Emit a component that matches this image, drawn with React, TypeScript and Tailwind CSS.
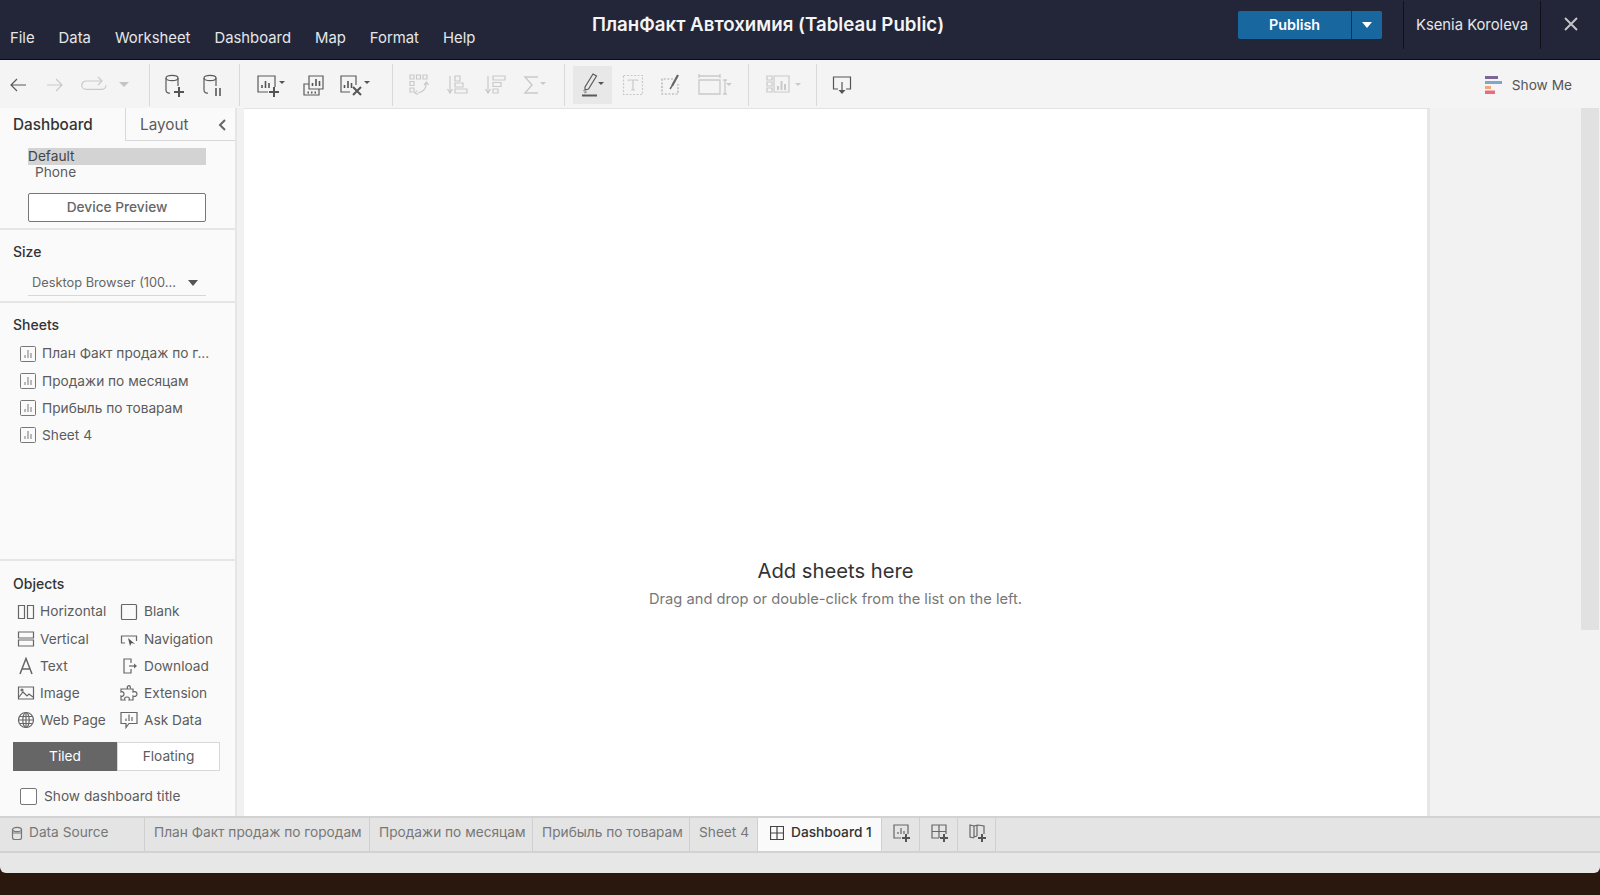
import React from "react";

const Ic = ({ w = 24, h = 24, c = "#5a5a5a", sw = 1.2, children }: { w?: number; h?: number; c?: string; sw?: number; children: React.ReactNode }) => (
  <svg width={w} height={h} viewBox={`0 0 ${w} ${h}`} fill="none" stroke={c} strokeWidth={sw}>
    {children}
  </svg>
);
const OFF = "#c9c9c9";
const Caret = ({ x, y, c = "#555", s = 3 }: { x: number; y: number; c?: string; s?: number }) => (
  <path d={`M${x} ${y}h${s * 2}l-${s} ${s}z`} fill={c} stroke="none" />
);
const Plus = ({ x, y, r = 5, c = "#555" }: { x: number; y: number; r?: number; c?: string }) => (
  <path d={`M${x - r} ${y}h${r * 2}M${x} ${y - r}v${r * 2}`} stroke={c} strokeWidth={2} />
);
const Bars = ({ x, y, c = "#555" }: { x: number; y: number; c?: string }) => (
  <path d={`M${x} ${y}v-3M${x + 3.5} ${y}v-7M${x + 7} ${y}v-5`} stroke={c} strokeWidth={1.6} />
);

const Back = ({ c = "#5a5a5a" }: { c?: string }) => (
  <Ic c={c}><path d="M20 12H5M11 6l-6 6 6 6" /></Ic>
);
const Forward = () => (
  <Ic c={OFF}><path d="M4 12h15M13 6l6 6-6 6" /></Ic>
);
const Redo = () => (
  <Ic w={30} c={OFF}><path d="M22 8H7a4.2 4.2 0 0 0 0 8.4h16a4.2 4.2 0 0 0 4-4.2" /><path d="M19 4l4 4-4 4" /></Ic>
);
const Cyl = ({ extra }: { extra: React.ReactNode }) => (
  <Ic w={24} h={26}>
    <ellipse cx="10" cy="6" rx="6" ry="2.6" />
    <path d="M4 6v12a3 3 0 0 0 4 3M16 6v8" />
    {extra}
  </Ic>
);
const NewSheet = () => (
  <Ic w={32} h={26}>
    <path d="M13 20H3V4h17v11" />
    <Bars x={7} y={16} />
    <Plus x={19} y={20} />
    <Caret x={24} y={9} />
  </Ic>
);
const Dup = () => (
  <Ic w={26} h={26}>
    <path d="M8 4h14v13H8z" />
    <Bars x={11.5} y={14} />
    <path d="M8 12H3v11h15v-6" />
    <path d="M6.5 20.5h1.5M10 20.5h1.5M13.5 20.5h1.5" strokeWidth={2} />
  </Ic>
);
const Clear = () => (
  <Ic w={34} h={26}>
    <path d="M12 20H3V4h15v9" />
    <Bars x={6.5} y={16} />
    <path d="M15 15l8 8M23 15l-8 8" strokeWidth={2} stroke="#555" />
    <Caret x={26} y={9} />
  </Ic>
);
const Swap = () => (
  <Ic w={24} h={26} c={OFF}>
    <path d="M3 3h4v4H3zM9.5 3h4v4h-4zM16 3h4v4h-4zM3 9.5h4v4H3zM3 16h4v4H3z" />
    <path d="M19 11c1 4-2 9-8 10M10 18.5l-2 2.5 3 1.5M17 13l2.5-3 2 3" />
  </Ic>
);
const SortA = () => (
  <Ic w={24} h={26} c={OFF}>
    <path d="M5 4v16M2.5 17l2.5 4 2.5-4" />
    <path d="M10 4h5v5h-5zM10 11h8v4h-8zM10 17h12v4H10z" />
  </Ic>
);
const SortD = () => (
  <Ic w={24} h={26} c={OFF}>
    <path d="M5 4v16M2.5 17l2.5 4 2.5-4" />
    <path d="M10 4h12v4H10zM10 10.5h8v4h-8zM10 17h5v4h-5z" />
  </Ic>
);
const Sigma = () => (
  <Ic w={28} h={26} c={OFF} sw={1.4}>
    <path d="M18 5H5l7 8-7 8h13" />
    <Caret x={20} y={10} c={OFF} />
  </Ic>
);
const Pen = () => (
  <Ic w={26} h={28}>
    <path d="M5 16L13 3l3.5 2-8 13-3.5 1z" />
    <path d="M3 19.5l3 1M4 22l3-1" stroke="#999" />
    <path d="M2 24.5h15" strokeWidth={2} />
    <Caret x={18} y={11} />
  </Ic>
);
const TBox = () => (
  <Ic w={22} h={22} c={OFF}>
    <path d="M1.5 1.5h19v19h-19z" strokeDasharray="2 1.5" />
    <path d="M6.5 7v-1h9v1M11 6v10M9 16h4" />
  </Ic>
);
const Annot = () => (
  <Ic w={22} h={24} c="#8c8c8c">
    <path d="M13 6H2v15h16V11" strokeDasharray="2 1.6" stroke="#aaa" />
    <path d="M18 2l-6 11" strokeWidth={2.2} stroke="#666" />
    <path d="M12 13l-2 3" strokeWidth={1.4} stroke="#666" />
  </Ic>
);
const Fit = () => (
  <Ic w={36} h={26} c={OFF} sw={1.3}>
    <path d="M2 2v4M2 4h21M23 2v4M2 8h21v14H2zM26 8h4M28 8v14M26 22h4" />
    <Caret x={29} y={11} c={OFF} />
  </Ic>
);
const SmallShow = () => (
  <Ic w={38} h={24} c={OFF}>
    <path d="M2 3h5v4H2zM2 9h5v4H2zM2 15h5v4H2zM9 3h15v16H9z" />
    <path d="M13 17v-4M16.5 17v-9M20 17v-6" strokeWidth={2} />
    <Caret x={30} y={10} c={OFF} />
  </Ic>
);
const Share = () => (
  <Ic w={22} h={22} c="#555">
    <path d="M7 15H2.5V3h17v12H15" />
    <path d="M11 8v10" />
    <path d="M7.5 16h7L11 20z" fill="#555" stroke="none" />
  </Ic>
);
const ShowIcon = () => (
  <svg width="17" height="18" viewBox="0 0 17 18">
    <rect x="0" y="0" width="13" height="3" fill="#7d6597" />
    <rect x="0" y="5" width="17" height="3" fill="#7fa6cc" />
    <rect x="0" y="10" width="6" height="3" fill="#f0a878" />
    <rect x="0" y="14.5" width="10" height="3.5" fill="#ee6a7a" />
  </svg>
);

const Tool = ({ className = "", children }: { className?: string; children: React.ReactNode }) => (
  <div className={`h-[38px] flex items-center justify-center shrink-0 ${className}`}>{children}</div>
);
const Sep = ({ className = "" }: { className?: string }) => <div className={`w-px h-[42px] bg-[#d9d9d9] shrink-0 ${className}`} />;

const Toolbar = () => (
  <div className="h-[48px] bg-[#f4f4f4] flex items-center shrink-0 pt-[2px]">
    <Tool className="w-[36px]"><Back /></Tool>
    <Tool className="w-[38px]"><Forward /></Tool>
    <Tool className="w-[40px]"><Redo /></Tool>
    <Tool className="w-[20px]"><Ic w={12} h={12} c={OFF}><Caret x={1} y={3} c="#c4c4c4" s={5} /></Ic></Tool>
    <Sep className="ml-[15px]" />
    <Tool className="w-[38px] ml-[5px]"><Cyl extra={<Plus x={17} y={20} />} /></Tool>
    <Tool className="w-[38px]"><Cyl extra={<path d="M16 16v8M20 16v8" strokeWidth={2} stroke="#777" />} /></Tool>
    <Sep className="ml-[8px]" />
    <Tool className="w-[38px] ml-[12px]"><NewSheet /></Tool>
    <Tool className="w-[38px] ml-[5px]"><Dup /></Tool>
    <Tool className="w-[38px] ml-[3px]"><Clear /></Tool>
    <Sep className="ml-[18px]" />
    <Tool className="w-[38px] ml-[7px]"><Swap /></Tool>
    <Tool className="w-[38px]"><SortA /></Tool>
    <Tool className="w-[38px]"><SortD /></Tool>
    <Tool className="w-[38px] ml-px"><Sigma /></Tool>
    <Sep className="ml-[11px]" />
    <Tool className="w-[39px] ml-[8px] bg-[#e8e8e8]"><Pen /></Tool>
    <Tool className="w-[38px] ml-[2px]"><TBox /></Tool>
    <Tool className="w-[38px]"><Annot /></Tool>
    <Tool className="w-[44px] ml-[3px]"><Fit /></Tool>
    <Sep className="ml-[11px]" />
    <Tool className="w-[50px] ml-[10px]"><SmallShow /></Tool>
    <Sep className="ml-[7px]" />
    <Tool className="w-[38px] ml-[6px]"><Share /></Tool>
    <div className="flex-1" />
    <div className="flex items-center gap-[10px] pr-[28px] text-[13.7px] text-[#555]">
      <ShowIcon />
      <span>Show Me</span>
    </div>
  </div>
);

const SheetIcon = () => (
  <Ic w={16} h={16} c="#777" sw={1}>
    <rect x="0.5" y="0.5" width="15" height="15" rx="1" />
    <path d="M5 12V9M8 12V4M11 12V7" />
  </Ic>
);

const H = ({ children, className = "" }: { children: React.ReactNode; className?: string }) => (
  <div className={`text-[14px] font-medium text-[#333] leading-[20px] ${className}`}>{children}</div>
);

const objs: [React.ReactNode, string, React.ReactNode, string][] = [
  [<Ic w={18} h={18} c="#666"><path d="M1.5 2.5h6v13h-6zM10.5 2.5h6v13h-6z" /></Ic>, "Horizontal",
   <Ic w={18} h={18} c="#666"><rect x="1.5" y="1.5" width="15" height="15" rx="1" /></Ic>, "Blank"],
  [<Ic w={18} h={18} c="#666"><path d="M1.5 2h15v6h-15zM1.5 10h15v6h-15z" /></Ic>, "Vertical",
   <Ic w={18} h={18} c="#666"><path d="M5 13H1.5V6h15v5" /><path d="M8 8l2 8 1.5-3 3.5 1z" fill="#555" stroke="none" /></Ic>, "Navigation"],
  [<Ic w={18} h={18} c="#666" sw={1.5}><path d="M3 17L9 1.5 15 17M5 12h8" /></Ic>, "Text",
   <Ic w={18} h={18} c="#666"><path d="M11 6V2H4v14h7v-4" /><path d="M9 9h6" /><path d="M14 6.5L17 9l-3 2.5z" fill="#666" stroke="none" /></Ic>, "Download"],
  [<Ic w={18} h={18} c="#666"><path d="M1.5 3h15v12h-15z" /><path d="M2 13l4-5 4 4 2-2 4 3" /><circle cx="5" cy="6" r="1" /></Ic>, "Image",
   <Ic w={18} h={18} c="#666"><path d="M8 2c2-1 3 1 2 3h3v3c2-1 4 0 4 2s-2 3-4 2v4H9c1-2 0-3-2-3s-3 1-2 3H1v-4c2 1 3-1 3-2S3 7 1 8V5h7c-1-1-1-2 0-3z" /></Ic>, "Extension"],
  [<Ic w={18} h={18} c="#666"><circle cx="9" cy="9" r="7.5" /><ellipse cx="9" cy="9" rx="3.2" ry="7.5" /><path d="M1.5 9h15M2.5 5.5h13M2.5 12.5h13M9 1.5v15" /></Ic>, "Web Page",
   <Ic w={18} h={18} c="#666"><path d="M1 1.5h16v11H9l-3 4v-4H1z" /><path d="M6 10V7.5M9 10V3.5M12 10V6" /></Ic>, "Ask Data"],
];

const Sidebar = () => (
  <div className="w-[235px] bg-[#fafafa] flex flex-col shrink-0 text-[#5c5c5c] text-[13.7px]">
    <div className="flex h-[33px] shrink-0">
      <div className="w-[126px] pl-[13px] pt-[2px] flex items-center text-[15.3px] font-medium text-[#333] border-r border-[#d8d8d8]">Dashboard</div>
      <div className="flex-1 flex items-center justify-between pl-[14px] pr-[8px] pt-[2px] text-[15.3px] border-b border-[#d8d8d8]">
        <span>Layout</span>
        <svg width="10" height="14" viewBox="0 0 10 14" fill="none" stroke="#666" strokeWidth="2"><path d="M8 2L3 7l5 5" /></svg>
      </div>
    </div>
    <div className="h-[89px] shrink-0 border-b-2 border-[#e6e6e6] pl-[28px] pr-[29px] pt-[7px]">
      <div className="bg-[#d3d3d3] h-[17px] leading-[17px] text-[#444]">Default</div>
      <div className="h-[15px] leading-[15px] pl-[7px]">Phone</div>
      <div className="mt-[13px] h-[29px] border border-[#777] rounded-[2px] bg-white flex items-center justify-center font-medium text-[#666]">Device Preview</div>
    </div>
    <div className="h-[73px] shrink-0 border-b-2 border-[#e6e6e6] pt-[12px]">
      <H className="pl-[13px]">Size</H>
      <div className="ml-[28px] mr-[29px] mt-[8px] pl-[4px] pr-[8px] h-[26px] border-b border-[#d8d8d8] flex items-center justify-between text-[12.8px] text-[#666]">
        <span>Desktop Browser (100...</span>
        <svg width="10" height="6" viewBox="0 0 10 6"><path d="M0 0h10L5 6z" fill="#555" /></svg>
      </div>
    </div>
    <div className="h-[258px] shrink-0 border-b-2 border-[#e6e6e6] pt-[12px]">
      <H className="pl-[13px] mb-[5px]">Sheets</H>
      {["План Факт продаж по г...", "Продажи по месяцам", "Прибыль по товарам", "Sheet 4"].map((t) => (
        <div key={t} className="h-[27.2px] flex items-center gap-[6px] pl-[20px]">
          <SheetIcon />
          <span>{t}</span>
        </div>
      ))}
    </div>
    <div className="flex-1 pt-[13px]">
      <H className="pl-[13px] mb-[4px]">Objects</H>
      {objs.map(([a, b, c, d]) => (
        <div key={b} className="h-[27.2px] flex items-center">
          <div className="w-[120px] flex items-center pl-[17px] gap-[5px]">{a}<span>{b}</span></div>
          <div className="flex items-center gap-[6px]">{c}<span>{d}</span></div>
        </div>
      ))}
      <div className="flex mx-[13px] mt-[8px] h-[29px] w-[207px]">
        <div className="w-[104px] bg-[#666] text-white flex items-center justify-center">Tiled</div>
        <div className="flex-1 bg-white border border-[#d8d8d8] flex items-center justify-center">Floating</div>
      </div>
      <div className="flex items-center gap-[7px] pl-[20px] mt-[15px]">
        <div className="w-[17px] h-[17px] border border-[#777] rounded-[2px] bg-white" />
        <span>Show dashboard title</span>
      </div>
    </div>
  </div>
);

const Tab = ({ className = "", children }: { className?: string; children: React.ReactNode }) => (
  <div className={`h-full flex items-center border-r border-[#cfcfcf] shrink-0 pb-[4px] ${className}`}>{children}</div>
);
const AddTab = ({ children }: { children: React.ReactNode }) => (
  <Tab className="w-[38px] justify-center pl-[3px]">{children}</Tab>
);

const TabBar = () => (
  <div className="h-[37px] shrink-0 bg-[#e4e4e4] border-y-2 border-[#d2d2d2] flex text-[13.7px] text-[#777]">
    <Tab className="w-[145px] pl-[11px] gap-[6px]">
      <Ic w={12} h={14} c="#777"><ellipse cx="6" cy="3.5" rx="4.5" ry="2.2" /><path d="M1.5 3.5v8a2 2 0 0 0 2 2h5a2 2 0 0 0 2-2v-8M1.5 7h9" /></Ic>
      <span>Data Source</span>
    </Tab>
    <Tab className="w-[225px] pl-[9px]">План Факт продаж по городам</Tab>
    <Tab className="w-[163px] pl-[9px]">Продажи по месяцам</Tab>
    <Tab className="w-[157px] pl-[9px]">Прибыль по товарам</Tab>
    <Tab className="w-[68px] pl-[9px]">Sheet 4</Tab>
    <Tab className="w-[124px] pl-[12px] gap-[7px] bg-[#fafafa] text-[#333] font-medium">
      <Ic w={14} h={14} c="#444"><path d="M.5.5h13v13H.5zM7 .5v13M.5 7h13" /></Ic>
      <span>Dashboard 1</span>
    </Tab>
    <AddTab><Ic w={20} h={20} c="#666"><path d="M9 15H2V2h14v9" /><path d="M6 11V9M9 11V5M12 11V8" /><Plus x={14} y={15} r={4} /></Ic></AddTab>
    <AddTab><Ic w={20} h={20} c="#666"><path d="M9 15H2V2h14v9M9 2v13M2 8.5h14" /><Plus x={14} y={15} r={4} /></Ic></AddTab>
    <AddTab><Ic w={20} h={20} c="#666"><path d="M9 13l-3 1V3l4-1 6 1v8M9 2v11M6 3L2 2v12l4 1" /><Plus x={14} y={15} r={4} /></Ic></AddTab>
  </div>
);

export default function App() {
  return (
    <div className="w-[1600px] h-[895px] overflow-hidden flex flex-col bg-[#2a180f]" style={{ fontFamily: 'Inter, "Liberation Sans", sans-serif' }}>
      <div className="h-[60px] shrink-0 bg-[#222638] border-b border-[#0c0c12] flex text-white">
        <div className="w-[592px] shrink-0 flex gap-[24px] pl-[10px] pt-[27px] text-[14.85px] leading-[22px] text-[#e6e6e8]">
          {["File", "Data", "Worksheet", "Dashboard", "Map", "Format", "Help"].map((m) => (
            <span key={m}>{m}</span>
          ))}
        </div>
        <div className="w-[646px] shrink-0 pt-[12px] text-[18.7px] leading-[26px] font-semibold text-[#f4f4f4]">ПланФакт Автохимия (Tableau Public)</div>
        <div className="shrink-0 mt-[11px] h-[28px] w-[144px] bg-[#18679f] rounded-[2px] flex text-[14.3px] font-semibold">
          <div className="w-[114px] flex items-center justify-center border-r border-[#12324d]">Publish</div>
          <div className="flex-1 flex items-center justify-center">
            <svg width="10" height="6" viewBox="0 0 10 6"><path d="M0 0h10L5 6z" fill="#fff" /></svg>
          </div>
        </div>
        <div className="ml-[21px] w-px h-[48px] mt-px bg-[#0f1018] shrink-0" />
        <div className="w-[136px] shrink-0 flex items-center justify-center pb-[9px] text-[14.8px] text-[#e6e6e8]">Ksenia Koroleva</div>
        <div className="w-px h-[48px] mt-px bg-[#0f1018] shrink-0" />
        <div className="flex-1 flex items-start justify-center pt-[17px]">
          <svg width="14" height="14" viewBox="0 0 14 14" stroke="#c4c4c8" strokeWidth="2"><path d="M1 1l12 12M13 1L1 13" /></svg>
        </div>
      </div>
      <Toolbar />
      <div className="flex-1 flex min-h-0">
        <Sidebar />
        <div className="w-[9px] shrink-0 bg-[#f1f1f1] border-l-2 border-[#e6e6e6]" />
        <div className="flex-1 bg-white flex flex-col items-center border-t border-[#e2e2e2] pt-[448px]">
          <div className="text-[20.2px] leading-[28px] text-[#333]">Add sheets here</div>
          <div className="mt-[3px] text-[14.7px] leading-[22px] text-[#777]">Drag and drop or double-click from the list on the left.</div>
        </div>
        <div className="w-[173px] shrink-0 bg-[#f2f2f2] border-l-[3px] border-[#e6e6e6] flex justify-end pr-px">
          <div className="w-[18px] h-[522px] bg-[#e1e1e1]" />
        </div>
      </div>
      <TabBar />
      <div className="h-[20px] shrink-0 bg-[#e7e7e7] rounded-b-[6px]" />
      <div className="h-[22px] shrink-0 bg-[#2a180f]" />
    </div>
  );
}
